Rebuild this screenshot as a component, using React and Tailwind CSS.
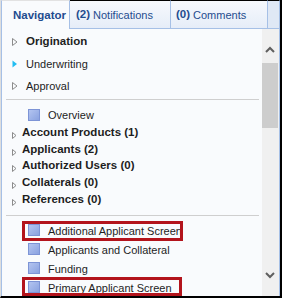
import React from "react";

const Tri = ({ blue }) => (
  <svg width="6" height="8" viewBox="0 0 6 8" className="shrink-0">
    {blue ? (
      <polygon points="0.5,0.5 5,4 0.5,7.5" fill="#22bdf2" />
    ) : (
      <polygon points="0.5,0.5 5,4 0.5,7.5" fill="none" stroke="#8c8c8c" strokeWidth="1" />
    )}
  </svg>
);

const SmallTri = () => (
  <svg width="5" height="7" viewBox="0 0 5 7" className="shrink-0 mt-[6px]">
    <polygon points="0.5,0.5 4,3.5 0.5,6.5" fill="none" stroke="#8c8c8c" strokeWidth="1" />
  </svg>
);

const Sq = ({ className = "" }) => (
  <span
    className={
      "block w-[12px] h-[12px] shrink-0 border border-[#7d94d6] bg-gradient-to-br from-[#b3c4f0] to-[#8aa2e0] " +
      className
    }
  />
);

const Chevron = ({ down }) => (
  <svg width="10" height="7" viewBox="0 0 10 7">
    {down ? (
      <polyline points="1,1 5,5 9,1" fill="none" stroke="#5f5f5f" strokeWidth="2" />
    ) : (
      <polyline points="1,6 5,2 9,6" fill="none" stroke="#5f5f5f" strokeWidth="2" />
    )}
  </svg>
);

export default function App() {
  const bold = ["Account Products (1)", "Applicants (2)", "Authorized Users (0)", "Collaterals (0)", "References (0)"];
  const screens = [
    { t: "Additional Applicant Screen", box: "top-[1px] h-[20px] w-[161px]" },
    { t: "Applicants and Collateral" },
    { t: "Funding" },
    { t: "Primary Applicant Screen", box: "top-0 h-[19px] w-[160px]" },
  ];
  return (
    <div
      className="w-[282px] h-[298px] flex flex-col border-l border-l-[#dedede] border-r-2 border-r-black border-b-2 border-b-black overflow-hidden text-[#1e1e1e]"
      style={{ fontFamily: "'Liberation Sans', Arial, sans-serif" }}
    >
      {/* tabs */}
      <div className="flex h-[29px] shrink-0">
        <div className="w-[69px] border-t border-t-[#e2e2e2] border-l border-r border-[#a6c0e6] bg-[#f9fbfd] flex items-center pt-px pl-[11px] text-[11.5px] font-bold text-[#1f4c8f]">
          Navigator
        </div>
        <div className="w-[101px] border-t border-t-black border-r border-b border-[#a6c0e6] bg-gradient-to-b from-[#f6f9fd] to-[#e6edf8] flex items-center pt-px pl-[6px] text-[11px] text-[#1f4c8f]">
          <span className="font-bold text-[11.5px]">(2)</span>
          <span className="ml-[3px]">Notifications</span>
        </div>
        <div className="w-[97px] border-t border-t-black border-r border-b border-[#a6c0e6] bg-gradient-to-b from-[#f6f9fd] to-[#e6edf8] flex items-center pt-px pl-[5px] text-[11px] text-[#1f4c8f]">
          <span className="font-bold text-[11.5px]">(0)</span>
          <span className="ml-[3px]">Comments</span>
        </div>
        <div className="flex-1 border-t border-t-black border-r border-b border-[#a6c0e6] bg-[#dfe8f5]" />
      </div>

      {/* content */}
      <div className="flex-1 flex border-l border-r border-[#a6c0e6] bg-[#f9fbfd] min-h-0">
        <div className="flex-1 flex flex-col pt-[2px] min-w-0">
          {[
            { t: "Origination", b: true },
            { t: "Underwriting", blue: true },
            { t: "Approval" },
          ].map((r) => (
            <div key={r.t} className="h-[22px] flex items-center pl-[10px] shrink-0">
              <Tri blue={r.blue} />
              <span className={"ml-[8px] " + (r.b ? "font-bold text-[11.5px]" : "text-[11px]")}>{r.t}</span>
            </div>
          ))}
          <div className="mt-[2px] h-px bg-[#cfcfcf] ml-[4px] mr-[3px] shrink-0" />
          <div className="mt-[7px] h-[17px] flex items-center pl-[26px] shrink-0">
            <Sq className="mb-[2px]" />
            <span className="ml-[8px] text-[11px]">Overview</span>
          </div>
          {bold.map((t) => (
            <div key={t} className="h-[16.75px] flex items-center pl-[10px] shrink-0">
              <SmallTri />
              <span className="ml-[5px] font-bold text-[11.5px]">{t}</span>
            </div>
          ))}
          <div className="mt-[7px] h-px bg-[#cfcfcf] ml-[4px] mr-[3px] shrink-0" />
          <div className="mt-[4px] flex flex-col">
            {screens.map((s) => (
              <div key={s.t} className="relative h-[19px] flex items-start pl-[26px] shrink-0">
                <Sq className="mt-[4px]" />
                <span className="ml-[8px] mt-[4px] leading-[15px] text-[11px]">{s.t}</span>
                {s.box && (
                  <span className={"absolute left-[20px] border-[3px] border-[#b3141c] " + s.box} />
                )}
              </div>
            ))}
          </div>
        </div>
        {/* scrollbar */}
        <div className="w-[17px] shrink-0 flex flex-col bg-[#f0f0f0]">
          <div className="h-[34px] flex justify-center pt-[17px] pr-px">
            <Chevron />
          </div>
          <div className="h-[65px] w-[16px] bg-[#cdcdcd]" />
          <div className="flex-1 flex flex-col justify-end items-center pb-[17px] pr-px">
            <Chevron down />
          </div>
        </div>
      </div>
    </div>
  );
}
